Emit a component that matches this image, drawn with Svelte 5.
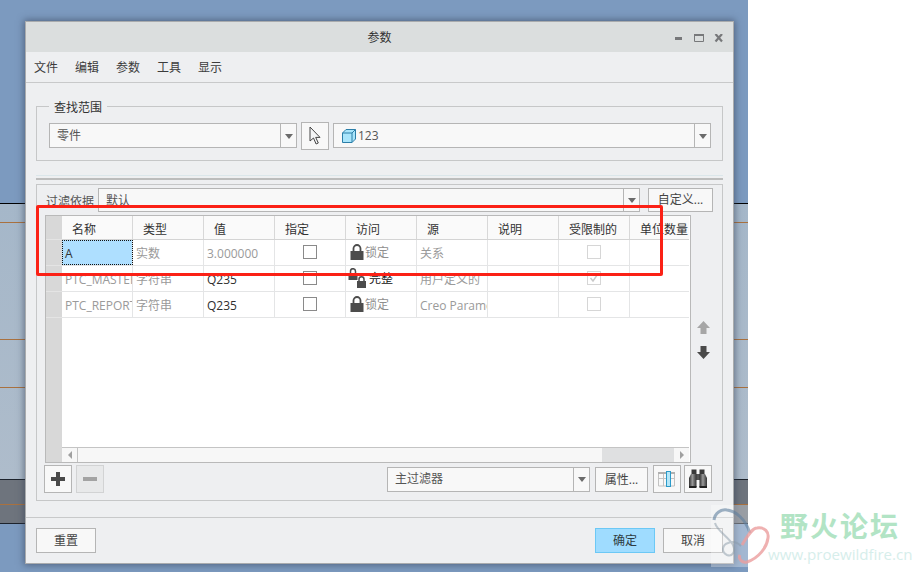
<script lang="ts">
  const columns = ['名称', '类型', '值', '指定', '访问', '源', '说明', '受限制的', '单位数量'];

  const rows = [
    { name: 'A', type: '实数', value: '3.000000', access: '锁定', source: '关系', restricted: false, active: true },
    { name: 'PTC_MASTER_MATERIAL', type: '字符串', value: 'Q235', access: '完整', source: '用户定义的', restricted: true },
    { name: 'PTC_REPORT_MATERIAL', type: '字符串', value: 'Q235', access: '锁定', source: 'Creo Parametric', restricted: false }
  ];

  const menu = ['文件', '编辑', '参数', '工具', '显示'];
</script>

{#snippet caret()}
  <span class="caret"><i></i></span>
{/snippet}

{#snippet lock()}
  <svg class="lock" width="14" height="16" viewBox="0 0 14 16" aria-hidden="true">
    <path d="M3.500 7V4.500a3.500 3.500 0 0 1 7 0V7" fill="none" stroke="#4c4c4c" stroke-width="1.800" />
    <rect x="0.500" y="7" width="13" height="9" fill="#4c4c4c" />
  </svg>
{/snippet}

{#snippet locks()}
  <svg class="lock pair" width="20" height="20" viewBox="0 0 20 20" aria-hidden="true">
    <path d="M2.500 5V3.200a2.500 2.500 0 0 1 5 0V5" fill="none" stroke="#4c4c4c" stroke-width="1.500" />
    <rect x="0.500" y="5" width="9" height="7" fill="#4c4c4c" />
    <path d="M11 13v-1.800a2.500 2.500 0 0 1 5 0V13" fill="none" stroke="#4c4c4c" stroke-width="1.500" />
    <rect x="9" y="13" width="9" height="7" fill="#4c4c4c" />
  </svg>
{/snippet}

<div class="desk">
  <div class="backdrop"></div>

  <section class="window">
    <header class="title">
      <span class="title-text">参数</span>
      <div class="controls">
        <svg width="52" height="12" viewBox="0 0 52 12" aria-hidden="true">
          <rect x="1" y="3" width="7" height="3" fill="#77787a" />
          <path d="M20.500 .5h9v7h-9z" fill="none" stroke="#77787a" />
          <rect x="20" y="0" width="10" height="2" fill="#77787a" />
          <path d="M41.500 0l6.500 7.500M48 0l-6.500 7.500" stroke="#77787a" stroke-width="2.200" fill="none" />
        </svg>
      </div>
    </header>

    <nav class="menu">
      {#each menu as item}<span>{item}</span>{/each}
    </nav>

    <div class="body">
      <div class="group">
        <span class="legend">查找范围</span>
        <div class="combo scope">
          <span class="combo-text">零件</span>
          {@render caret()}
        </div>
        <button class="tool pick" aria-label="选择">
          <svg width="12" height="20" viewBox="0 0 12 20" aria-hidden="true">
            <path d="M1 1v14l3.500-3 2.600 6 2.200-1-2.600-5.600H11z" fill="#f4f5f6" stroke="#444" stroke-width="1" />
          </svg>
        </button>
        <div class="combo model">
          <svg width="14" height="14" viewBox="0 0 14 14" aria-hidden="true">
            <path d="M.5 4 4 .5h9.500V10L10 13.500H.5z" fill="#a9e5fb" stroke="#2b7ea8" />
            <path d="M10 13.500V4H.5M10 4l3.500-3.500" fill="none" stroke="#2b7ea8" />
          </svg>
          <span class="combo-text">123</span>
          {@render caret()}
        </div>
      </div>

      <div class="splitter"></div>

      <div class="panel">
        <div class="filter">
          <span class="filter-label">过滤依据</span>
          <div class="combo filter-combo">
            <span class="combo-text">默认</span>
            {@render caret()}
          </div>
          <button class="btn custom">自定义...</button>
        </div>

        <div class="table-row">
          <div class="table">
            <div class="gutter">
              <i></i><i></i><i></i><i></i>
            </div>
            <div class="table-main">
              <div class="head">
                {#each columns as col}<span class="th">{col}</span>{/each}
              </div>

              {#each rows as row}
                <div class="tr">
                  <span class="td dim" class:active={row.active}>{row.name}</span>
                  <span class="td dim">{row.type}</span>
                  <span class="td" class:dim={row.active}>{row.value}</span>
                  <span class="td center"><i class="check"></i></span>
                  <span class="td access">
                    {#if row.access === '完整'}
                      {@render locks()}<b>{row.access}</b>
                    {:else}
                      {@render lock()}<em>{row.access}</em>
                    {/if}
                  </span>
                  <span class="td dim">{row.source}</span>
                  <span class="td"></span>
                  <span class="td center">
                    <i class="check faint">
                      {#if row.restricted}
                        <svg width="10" height="10" viewBox="0 0 10 10" aria-hidden="true">
                          <path d="M1.500 5l2.500 3 4.500-6.500" fill="none" stroke="#c8c8c8" stroke-width="1.400" />
                        </svg>
                      {/if}
                    </i>
                  </span>
                  <span class="td"></span>
                </div>
              {/each}

              <div class="grow"></div>

              <div class="hscroll">
                <span class="sb-btn"><i class="tri left"></i></span>
                <span class="thumb"></span>
                <span class="track"></span>
                <span class="sb-btn"><i class="tri right"></i></span>
              </div>
            </div>
          </div>

          <div class="order">
            <svg width="13" height="13" viewBox="0 0 13 13" aria-hidden="true">
              <path d="M6.500 0 13 7H9.500v6h-6V7H0z" fill="#a6a6a6" />
            </svg>
            <svg width="13" height="13" viewBox="0 0 13 13" aria-hidden="true">
              <path d="M6.500 13 13 6H9.500V0h-6v6H0z" fill="#4a4a4a" />
            </svg>
          </div>
        </div>

        <div class="toolbar">
          <button class="tool" aria-label="添加">
            <svg width="14" height="14" viewBox="0 0 14 14" aria-hidden="true">
              <path d="M5 0h4v5h5v4H9v5H5V9H0V5h5z" fill="#4a4a4a" />
            </svg>
          </button>
          <button class="tool off" aria-label="删除">
            <svg width="14" height="4" viewBox="0 0 14 4" aria-hidden="true">
              <rect width="14" height="4" fill="#a3a3a3" />
            </svg>
          </button>
          <div class="combo master">
            <span class="combo-text">主过滤器</span>
            {@render caret()}
          </div>
          <button class="btn props">属性...</button>
          <button class="tool cols" aria-label="列">
            <svg width="18" height="16" viewBox="0 0 18 16" aria-hidden="true">
              <rect y="1" width="17" height="2" fill="#b0b0b0" />
              <path d="M.5 3v12h16V3M5.500 3v12M11.500 3v12M.5 7.500h16" fill="none" stroke="#c2c2c2" />
              <rect x="8.500" y="0.500" width="4" height="15" fill="#b4e6f8" stroke="#2b9ac9" />
            </svg>
          </button>
          <button class="tool" aria-label="查找">
            <svg width="20" height="20" viewBox="0 0 20 20" aria-hidden="true">
              <defs>
                <linearGradient id="barrel" x1="0" x2="1" y1="0" y2="0">
                  <stop offset="0" stop-color="#2e2e2e" />
                  <stop offset="0.450" stop-color="#9a9a9a" />
                  <stop offset="1" stop-color="#333" />
                </linearGradient>
              </defs>
              <rect x="3.500" y="0.500" width="5" height="5" fill="#3a3a3a" />
              <rect x="11.500" y="0.500" width="5" height="5" fill="#3a3a3a" />
              <rect x="8" y="5" width="4" height="6" fill="#555" />
              <path d="M3 5h5.500v13H1V9z" fill="url(#barrel)" />
              <path d="M11.500 5H17l2 4v9h-7.500z" fill="url(#barrel)" />
              <rect x="1" y="17" width="7.500" height="2" fill="#222" />
              <rect x="11.500" y="17" width="7.500" height="2" fill="#222" />
            </svg>
          </button>
        </div>
      </div>
    </div>

    <footer class="footer">
      <button class="btn wide">重置</button>
      <button class="btn wide ok">确定</button>
      <button class="btn wide">取消</button>
    </footer>
  </section>

  <div class="callout"></div>

  <div class="mark">
    <div class="mark-veil"></div>
    <svg class="mark-swirl" width="62" height="66" viewBox="0 0 62 66" aria-hidden="true">
      <path d="M3 17C4 10 10 6 16 7c8 1 18 8 23 23" fill="none" stroke="#5f7f9f" stroke-opacity=".6" stroke-width="3" />
      <path d="M4 20c2 8 14 14 18 22 3 7-1 12-6 10-6-3-5-10 1-12 5-2 10 0 13 3" fill="none" stroke="#8a9aa8" stroke-opacity=".5" stroke-width="2" />
      <path d="M31 42c5-8 10-17 15-17 8-1 12 4 11 10-1 9-9 20-21 24-5 1-9-3-7-7" fill="none" stroke="#eb9d9d" stroke-opacity=".8" stroke-width="3" />
    </svg>
    <strong class="mark-name">野火论坛</strong>
    <span class="mark-url">www.proewildfire.cn</span>
  </div>
</div>

<style>
  :global(body) {
    margin: 0;
    background: #fff;
  }
  .desk {
    position: relative;
    width: 922px;
    height: 572px;
    overflow: hidden;
    font: 12px/16px "Open Sans", "Noto Sans CJK SC", sans-serif;
    color: #3c3c3c;
  }
  .backdrop {
    position: absolute;
    left: 0;
    top: 0;
    width: 748px;
    height: 572px;
    background:
      linear-gradient(#000 0 0) 0 203px / 100% 1px no-repeat,
      linear-gradient(#a9713f 0 0) 0 222px / 100% 1px no-repeat,
      linear-gradient(#a9713f 0 0) 0 339px / 100% 1px no-repeat,
      linear-gradient(#a9713f 0 0) 0 387px / 100% 1px no-repeat,
      linear-gradient(#1d232c 0 0) 0 479px / 100% 1px no-repeat,
      linear-gradient(#a9713f 0 0) 0 504px / 100% 1px no-repeat,
      linear-gradient(#1d232c 0 0) 0 523px / 100% 1px no-repeat,
      linear-gradient(#6e747d 0 0) 0 480px / 100% 43px no-repeat,
      linear-gradient(#7c9abf 0 203px, #a5b7c9 203px, #aebccb 479px, #7c9abf 523px);
  }
  .window {
    position: absolute;
    left: 25px;
    top: 21px;
    width: 709px;
    height: 543px;
    box-sizing: border-box;
    border: 1px solid #a9abad;
    background: #eeeff1;
    box-shadow: 0 0 7px 1px rgba(50, 62, 85, 0.6);
    display: flex;
    flex-direction: column;
  }
  .title {
    height: 30px;
    flex: none;
    background: #dbdede;
    display: flex;
    align-items: center;
    justify-content: center;
    padding-top: 1px;
    box-sizing: border-box;
    position: relative;
    color: #333;
  }
  .controls {
    position: absolute;
    right: 7px;
    top: 12px;
    height: 12px;
    line-height: 0;
  }
  .menu {
    height: 29px;
    flex: none;
    border-bottom: 1px solid #c8c9ca;
    display: flex;
    align-items: center;
    gap: 17px;
    padding-left: 8px;
    padding-top: 1px;
    box-sizing: content-box;
  }
  .body {
    flex: 1;
    padding: 23px 10px 0;
  }
  .group {
    position: relative;
    height: 55px;
    box-sizing: border-box;
    border: 1px solid #c6c7c8;
    padding: 16px 0 0 12px;
    display: flex;
    align-items: flex-start;
    gap: 4px;
  }
  .legend {
    position: absolute;
    left: 12px;
    top: -7px;
    padding: 0 5px;
    background: #eeeff1;
    color: #333;
  }
  .combo {
    height: 25px;
    box-sizing: border-box;
    border: 1px solid #b5b5b5;
    background: #f8f8f8;
    display: flex;
    align-items: center;
    padding-left: 7px;
    flex: none;
  }
  .combo-text {
    flex: 1;
    color: #555;
    white-space: nowrap;
  }
  .caret {
    flex: none;
    width: 15px;
    height: 100%;
    border-left: 1px solid #b5b5b5;
    display: flex;
    align-items: center;
    justify-content: center;
  }
  .caret i {
    width: 0;
    height: 0;
    margin-top: 1px;
    border: 4px solid transparent;
    border-top: 5px solid #6b6b6b;
    border-bottom: 0;
    display: block;
  }
  .scope {
    width: 248px;
  }
  .model {
    width: 378px;
    gap: 2px;
    padding-left: 8px;
  }
  .tool {
    width: 28px;
    height: 28px;
    flex: none;
    padding: 0;
    box-sizing: border-box;
    border: 1px solid #b5b5b5;
    background: #f8f8f8;
    display: flex;
    align-items: center;
    justify-content: center;
  }
  .pick {
    margin-top: -1px;
  }
  .off {
    background: #e8e9ea;
    border-color: #d2d3d4;
  }
  .splitter {
    height: 2px;
    margin-top: 14px;
    border-top: 1px solid #dbe6ea;
    border-bottom: 2px solid #bcbcbc;
  }
  .panel {
    height: 317px;
    margin-top: 4px;
    box-sizing: border-box;
    border: 1px solid #c6c7c8;
    padding: 3px 0 0 7px;
    display: flex;
    flex-direction: column;
  }
  .filter {
    height: 24px;
    flex: none;
    display: flex;
    align-items: stretch;
    gap: 8px;
  }
  .filter-label {
    width: 49px;
    margin-left: 2px;
    margin-right: -5px;
    line-height: 27px;
    color: #555;
    white-space: nowrap;
  }
  .filter-combo {
    width: 542px;
    height: 24px;
  }
  .filter-combo .combo-text {
    padding-top: 2px;
  }
  .btn {
    height: 25px;
    box-sizing: border-box;
    border: 1px solid #b5b5b5;
    background: #f8f8f8;
    padding: 0;
    font: inherit;
    color: #444;
    flex: none;
  }
  .custom {
    width: 65px;
    height: 24px;
  }
  .table-row {
    display: flex;
    height: 248px;
    margin-top: 3px;
    flex: none;
    padding-left: 1px;
  }
  .table {
    width: 646px;
    height: 248px;
    box-sizing: border-box;
    border: 1px solid #b9b9b9;
    background: #fff;
    display: flex;
    flex: none;
  }
  .gutter {
    width: 16px;
    flex: none;
    background: #d8d8d8;
    display: flex;
    flex-direction: column;
  }
  .gutter i {
    height: 25px;
    flex: none;
    border-bottom: 1px solid #e4e4e4;
  }
  .gutter i:first-child {
    height: 23px;
  }
  .table-main {
    flex: 1;
    min-width: 0;
    display: flex;
    flex-direction: column;
    padding-right: 1px;
  }
  .head,
  .tr {
    display: grid;
    grid-template-columns: repeat(8, 71px) 1fr;
    flex: none;
  }
  .head {
    height: 24px;
    box-sizing: border-box;
    background: #fafafa;
    border-bottom: 1px solid #d4d4d4;
  }
  .th {
    box-sizing: border-box;
    border-right: 1px solid #d8d8d8;
    padding-left: 10px;
    line-height: 27px;
    color: #333;
    white-space: nowrap;
    overflow: hidden;
  }
  .th:last-child {
    border-right: 0;
  }
  .tr {
    height: 26px;
    box-sizing: border-box;
    border-bottom: 1px solid #e4e5e6;
  }
  .td {
    box-sizing: border-box;
    border-right: 1px solid #e4e5e6;
    padding-left: 3px;
    line-height: 27px;
    color: #2f2f2f;
    white-space: nowrap;
    overflow: hidden;
  }
  .td:last-child {
    border-right: 0;
  }
  .dim {
    color: #9a9a9a;
  }
  .active {
    background: #aedfff;
    outline: 1px dotted #111;
    outline-offset: -1px;
    color: #333;
  }
  .center {
    padding: 0;
    display: flex;
    align-items: center;
    justify-content: center;
  }
  .check {
    width: 12px;
    height: 12px;
    border: 1px solid #8a8a8a;
    background: #fff;
    display: flex;
    align-items: center;
    justify-content: center;
    margin-bottom: 2px;
  }
  .faint {
    border-color: #d6d6d6;
  }
  .access {
    display: flex;
    align-items: center;
    padding-left: 4px;
    gap: 1px;
  }
  .access em {
    font-style: normal;
    color: #8f8f8f;
  }
  .access b {
    font-weight: 400;
    color: #111;
  }
  .access .lock {
    margin-bottom: 2px;
    flex: none;
  }
  .access .pair {
    margin-left: -2px;
  }
  .grow {
    flex: 1;
  }
  .hscroll {
    height: 14px;
    flex: none;
    border-top: 1px solid #c4c4c4;
    display: flex;
    background: #f7f7f7;
  }
  .sb-btn {
    width: 15px;
    flex: none;
    background: #f7f7f7;
    display: flex;
    align-items: center;
    justify-content: center;
  }
  .thumb {
    flex: 1;
    border-left: 1px solid #c4c4c4;
  }
  .track {
    width: 72px;
    flex: none;
    background: #dfe0e1;
  }
  .tri {
    width: 0;
    height: 0;
    border: 4px solid transparent;
    display: block;
  }
  .tri.left {
    border-left: 0;
    border-right: 4px solid #a0a0a0;
  }
  .tri.right {
    border-right: 0;
    border-left: 4px solid #a0a0a0;
  }
  .order {
    padding: 106px 0 0 6px;
    display: flex;
    flex-direction: column;
    gap: 12px;
  }
  .toolbar {
    height: 28px;
    margin-top: 2px;
    flex: none;
    display: flex;
    align-items: center;
  }
  .toolbar .off {
    margin-left: 4px;
  }
  .master {
    width: 203px;
    margin-left: 283px;
  }
  .props {
    width: 53px;
    margin-left: 5px;
    margin-top: 1px;
  }
  .cols {
    margin-left: 5px;
    margin-right: 3px;
  }
  .footer {
    flex: none;
    height: 46px;
    box-sizing: border-box;
    border-top: 1px solid #c8c9ca;
    padding: 10px 10px 0;
    display: flex;
    align-items: flex-start;
    gap: 8px;
  }
  .wide {
    width: 60px;
  }
  .wide:first-child {
    margin-right: auto;
  }
  .ok {
    background: #9fdcff;
    border-color: #6cc8f5;
    color: #2e3b42;
  }
  .callout {
    position: absolute;
    left: 36px;
    top: 205px;
    width: 627px;
    height: 71px;
    box-sizing: border-box;
    border: 3px solid #fb2116;
    border-radius: 2px;
  }
  .mark-veil {
    position: absolute;
    left: 711px;
    top: 505px;
    width: 37px;
    height: 62px;
    background: rgba(255, 255, 255, 0.3);
  }
  .mark-swirl {
    position: absolute;
    left: 711px;
    top: 503px;
  }
  .mark-name {
    position: absolute;
    left: 780px;
    top: 508px;
    font: 700 28px/34px "Noto Sans CJK SC", sans-serif;
    letter-spacing: 2px;
    color: #b2e4c5;
    white-space: nowrap;
  }
  .mark-url {
    position: absolute;
    left: 768px;
    top: 545px;
    font: 400 15.100px/18px "Open Sans", sans-serif;
    color: #d6eeeb;
    white-space: nowrap;
  }
</style>
